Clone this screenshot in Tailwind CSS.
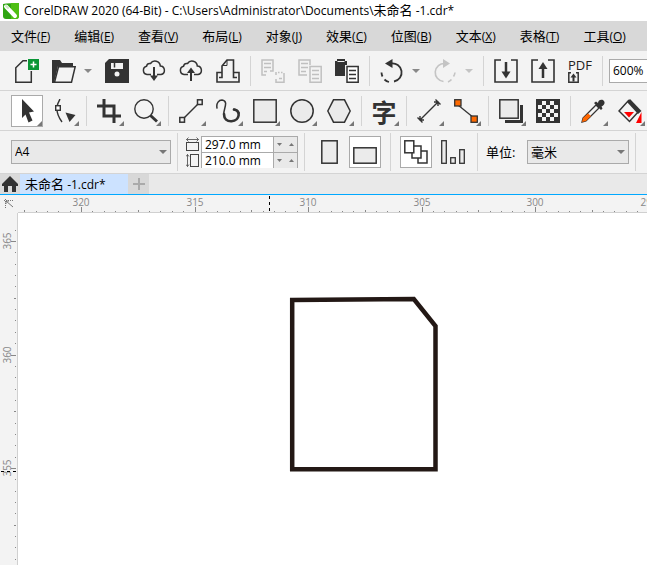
<!DOCTYPE html>
<html lang="zh-CN">
<head>
  <meta charset="UTF-8" />
  <meta name="viewport" content="width=device-width, initial-scale=1.0" />
  <title>CorelDRAW 2020 (64-Bit)</title>
  <script src="https://cdn.jsdelivr.net/npm/@tailwindcss/browser@4"></script>
</head>
<body class="h-screen flex flex-col overflow-hidden bg-white text-black text-[12px] leading-4 font-['Open_Sans','Noto_Sans_CJK_SC',sans-serif]">

  <!-- Shared pieces -->
  <svg class="hidden">
    <defs>
      <pattern id="grip" width="4" height="4" patternUnits="userSpaceOnUse">
        <rect width="1" height="1" fill="#b4b4b4" /><rect x="2" y="2" width="1" height="1" fill="#b4b4b4" />
      </pattern>
      <symbol id="flyout" viewBox="0 0 5 5"><path d="M5 0V5H0Z" fill="#777" /></symbol>
      <symbol id="caret" viewBox="0 0 8 4"><path d="M0 0H8L4 4Z" /></symbol>
    </defs>
  </svg>

  <!-- Title bar -->
  <header class="h-[21px] shrink-0 flex items-center pl-[3px] gap-[5px] whitespace-nowrap">
    <svg class="w-4 h-4 shrink-0" viewBox="0 0 16 16">
      <path d="M0 1Q6 0 16 0V13Q16 16 13 16H3Q0 16 0 13Z" fill="#2fa512" />
      <path d="M8 0H16V13Q16 16 13 16H8Z" fill="#4fbf14" />
      <path d="M3 3.500L12 13" stroke="#fff" stroke-width="4" stroke-linecap="round" />
      <path d="M3 3L5 5" stroke="#cfe8c5" stroke-width="2" stroke-linecap="round" />
    </svg>
    <h1>CorelDRAW 2020 (64-Bit) - C:\Users\Administrator\Documents\<span class="text-[13px]">未命名</span> -1.cdr*</h1>
  </header>

  <!-- Menu -->
  <nav class="h-[30px] shrink-0 flex items-center gap-6 pl-[11px] bg-[#d8d8d8] whitespace-nowrap">
    <button><span class="text-[13px]">文件</span>(<u>F</u>)</button>
    <button><span class="text-[13px]">编辑</span>(<u>E</u>)</button>
    <button><span class="text-[13px]">查看</span>(<u>V</u>)</button>
    <button><span class="text-[13px]">布局</span>(<u>L</u>)</button>
    <button><span class="text-[13px]">对象</span>(<u>J</u>)</button>
    <button><span class="text-[13px]">效果</span>(<u>C</u>)</button>
    <button><span class="text-[13px]">位图</span>(<u>B</u>)</button>
    <button><span class="text-[13px]">文本</span>(<u>X</u>)</button>
    <button><span class="text-[13px]">表格</span>(<u>T</u>)</button>
    <button><span class="text-[13px]">工具</span>(<u>O</u>)</button>
  </nav>

  <!-- Standard toolbar -->
  <div class="h-10 shrink-0 flex items-center bg-[#f3f3f3] border-b border-[#d4d4d4] pl-[2px]">
    <svg class="w-[6px] h-9 mr-[7px] shrink-0"><rect width="6" height="36" fill="url(#grip)" /></svg>
    <div class="flex shrink-0 gap-[13px]">
      <button aria-label="New">
        <svg class="w-6 h-6" viewBox="0 0 24 24" fill="none" stroke="#333" stroke-width="1.500">
          <path d="M12 1.700H7.500L1 8.500V23H16.300V12M7.500 2V8.500H1" stroke="none" />
          <path d="M12 1.700H8L.8 8.800V23.200H16.300V12" />
          <rect x="13" y="0" width="11" height="11" fill="#0a9636" stroke="none" />
          <path d="M18.500 2.500V8.500M15.500 5.500H21.500" stroke="#fff" />
        </svg>
      </button>
      <div class="flex">
        <button aria-label="Open">
          <svg class="w-6 h-6" viewBox="0 0 24 24">
            <path d="M0 24V1H8L10 4H21V7H6L2 24Z" fill="#333" />
            <path d="M6.500 7.700H23.200L19.500 23.200H2.500Z" fill="#f3f3f3" stroke="#333" stroke-width="1.500" />
          </svg>
        </button>
        <button aria-label="Open recent" class="w-4 flex items-center justify-end"><svg class="w-2 h-1 fill-[#888]"><use href="#caret" /></svg></button>
      </div>
      <button aria-label="Save">
        <svg class="w-6 h-6" viewBox="0 0 24 24">
          <path d="M4 0H24V24H0V4Z" fill="#333" />
          <path d="M6 4H18V10H6Z" fill="#f3f3f3" /><path d="M9.500 4V8.500" stroke="#333" stroke-width="1.500" />
          <circle cx="12" cy="15" r="2.500" fill="#f3f3f3" />
        </svg>
      </button>
      <button aria-label="Open from cloud">
        <svg class="w-6 h-6" viewBox="0 0 24 24" fill="none" stroke="#333" stroke-width="1.500">
          <path d="M9 15.500H5A4.200 4.200 0 0 1 4.500 7.300A3.500 3.500 0 0 1 8.500 4.500A5.300 5.300 0 0 1 18.300 7A4.300 4.300 0 0 1 19 15.500H15" />
          <path d="M12 8V20" stroke-width="2" /><path d="M8 16.500H16L12 22Z" fill="#333" stroke="none" />
        </svg>
      </button>
      <button aria-label="Save to cloud">
        <svg class="w-6 h-6" viewBox="0 0 24 24" fill="none" stroke="#333" stroke-width="1.500">
          <path d="M9 15.500H5A4.200 4.200 0 0 1 4.500 7.300A3.500 3.500 0 0 1 8.500 4.500A5.300 5.300 0 0 1 18.300 7A4.300 4.300 0 0 1 19 15.500H15" />
          <path d="M12 12V22" stroke-width="2" /><path d="M8 14H16L12 8.500Z" fill="#333" stroke="none" />
        </svg>
      </button>
      <button aria-label="Print">
        <svg class="w-6 h-6" viewBox="0 0 24 24" fill="none" stroke="#333" stroke-width="1.600">
          <path d="M6 13.500H1V23H23V13.500H18" />
          <path d="M3 18.500H6V7L11 1H17.500V18.500H21" /><path d="M11 1V6.500H6" stroke-width="1" />
        </svg>
      </button>
    </div>
    <div class="w-px h-[30px] bg-[#d4d4d4] mx-[10px] shrink-0"></div>
    <div class="flex shrink-0 gap-[13px]">
      <button aria-label="Cut" disabled>
        <svg class="w-6 h-6" viewBox="0 0 24 24" fill="none" stroke="#c0c0c0" stroke-width="1.500">
          <path d="M5 16H1V1H12V12H9M3 4.500H10M3 8.500H10M3 12.500H6" />
          <path d="M15 13V16M17 13.500H18.500M20 13.500H21.500M23 14V23.300H15V20M18 19.500H21" />
        </svg>
      </button>
      <button aria-label="Copy" disabled>
        <svg class="w-6 h-6" viewBox="0 0 24 24" fill="none" stroke="#c0c0c0" stroke-width="1.500">
          <path d="M9 16H1V1H12V6M3 4.500H10M3 8.500H10M3 12.500H8" />
          <path d="M12 7.500H23.200V23.200H12ZM14 11.500H21M14 15.500H21M14 19.500H21" />
        </svg>
      </button>
      <button aria-label="Paste">
        <svg class="w-6 h-6" viewBox="0 0 24 24">
          <path d="M0 2H2V0H10V2H12V6H10V17H0Z" fill="#333" /><path d="M2.500 2.500H9.500" stroke="#f3f3f3" />
          <path d="M12 7.500H23.200V23.200H12ZM14 11.500H21M14 15.500H21M14 19.500H21" fill="#fff" stroke="#333" stroke-width="1.500" />
        </svg>
      </button>
    </div>
    <div class="w-px h-[30px] bg-[#d4d4d4] mx-[10px] shrink-0"></div>
    <div class="flex shrink-0 gap-[13px]">
      <div class="flex">
        <button aria-label="Undo">
          <svg class="w-6 h-6" viewBox="0 0 24 24" fill="none" stroke="#333" stroke-width="1.800">
            <path d="M11 4.500A9 9 0 0 1 14 22.500" /><path d="M9 23A10 10 0 0 1 4.500 20.500M2.500 17.500A10 10 0 0 1 1.500 13.500" />
            <path d="M5 4.500L12.500 0V9Z" fill="#333" stroke="none" />
          </svg>
        </button>
        <button aria-label="Undo list" class="w-4 flex items-center justify-end"><svg class="w-2 h-1 fill-[#888]"><use href="#caret" /></svg></button>
      </div>
      <div class="flex">
        <button aria-label="Redo" disabled>
          <svg class="w-6 h-6" viewBox="0 0 24 24" fill="none" stroke="#c4c4c4" stroke-width="1.600">
            <path d="M12 4.500A9 9 0 0 0 10.500 22.500" /><path d="M15 23A10 10 0 0 0 18.500 20.500M20.500 17.500A10 10 0 0 0 22 13.500" />
            <path d="M17 4.500L10 0V9Z" fill="#c4c4c4" stroke="none" />
          </svg>
        </button>
        <button aria-label="Redo list" disabled class="w-4 flex items-center justify-end"><svg class="w-2 h-1 fill-[#c4c4c4]"><use href="#caret" /></svg></button>
      </div>
    </div>
    <div class="w-px h-[30px] bg-[#d4d4d4] mx-[10px] shrink-0"></div>
    <div class="flex shrink-0 gap-[13px]">
      <button aria-label="Import">
        <svg class="w-6 h-6" viewBox="0 0 24 24" fill="none" stroke="#333" stroke-width="1.600">
          <path d="M7 1H1V23H23V1H17" /><path d="M12 3V14" stroke-width="2.500" /><path d="M7.500 12.500H16.500L12 19.500Z" fill="#333" stroke="none" />
        </svg>
      </button>
      <button aria-label="Export">
        <svg class="w-6 h-6" viewBox="0 0 24 24" fill="none" stroke="#333" stroke-width="1.600">
          <path d="M7 1H1V23H23V1H17" /><path d="M12 8V19" stroke-width="2.500" /><path d="M7.500 10H16.500L12 3Z" fill="#333" stroke="none" />
        </svg>
      </button>
      <button class="w-6 h-6 flex flex-col items-start gap-px">
        <span class="text-[13px] leading-3 text-[#222]">PDF</span>
        <svg class="w-[11px] h-[11px]" viewBox="0 0 11 11" fill="none" stroke="#333" stroke-width="1.500">
          <path d="M3 .8H.8V10.200H10.200V.8H8" /><path d="M5.500 5V9.500" stroke-width="2" /><path d="M2.500 5.500H8.500L5.500 1.500Z" fill="#333" stroke="none" />
        </svg>
      </button>
    </div>
    <div class="w-px h-[30px] bg-[#d4d4d4] ml-[10px] mr-[6px] shrink-0"></div>
    <input aria-label="Zoom level" value="600%" class="w-24 h-6 shrink-0 px-[3px] bg-white border border-[#aaa]" />
  </div>

  <!-- Toolbox -->
  <div class="h-10 shrink-0 flex items-center bg-[#f3f3f3] border-b border-[#d4d4d4] pl-[2px]">
    <svg class="w-[6px] h-9 mr-[7px] shrink-0"><rect width="6" height="36" fill="url(#grip)" /></svg>
    <div class="flex shrink-0 gap-[13px]">
      <button aria-label="Pick" class="relative -m-1 p-[3px] bg-white border border-[#aaa]">
        <svg class="w-6 h-6" viewBox="0 0 24 24"><path d="M7 0L19 12.500L14 13.500L17.500 21.500L13.500 23.500L10.500 15.500L7 19Z" fill="#333" /></svg>
        <svg class="absolute right-0 bottom-0 w-[5px] h-[5px]"><use href="#flyout" /></svg>
      </button>
      <button aria-label="Shape" class="relative">
        <svg class="w-6 h-6" viewBox="0 0 24 24" fill="none" stroke="#333" stroke-width="1.400">
          <path d="M8 0Q1 11 10 23" /><rect x="3.700" y="6.700" width="4.600" height="4.600" fill="#fff" />
          <path d="M13.500 13.500L23.500 16L17.500 23Z" fill="#333" stroke="none" />
        </svg>
        <svg class="absolute -right-[3px] -bottom-[3px] w-[5px] h-[5px]"><use href="#flyout" /></svg>
      </button>
    </div>
    <div class="w-px h-[30px] bg-[#d4d4d4] mx-[10px] shrink-0"></div>
    <div class="flex shrink-0 gap-[13px]">
      <button aria-label="Crop" class="relative">
        <svg class="w-6 h-6" viewBox="0 0 24 24" fill="none" stroke="#333" stroke-width="3"><path d="M7 0V17H24M0 7H17V24" /></svg>
        <svg class="absolute -right-[3px] -bottom-[3px] w-[5px] h-[5px]"><use href="#flyout" /></svg>
      </button>
      <button aria-label="Zoom" class="relative">
        <svg class="w-6 h-6" viewBox="0 0 24 24" fill="none" stroke="#333">
          <circle cx="10" cy="10" r="9.200" stroke-width="1.400" /><path d="M16.500 16.500L23 22.500" stroke-width="3" />
        </svg>
        <svg class="absolute -right-[3px] -bottom-[3px] w-[5px] h-[5px]"><use href="#flyout" /></svg>
      </button>
    </div>
    <div class="w-px h-[30px] bg-[#d4d4d4] mx-[10px] shrink-0"></div>
    <div class="flex shrink-0 gap-[13px]">
      <button aria-label="Freehand" class="relative">
        <svg class="w-6 h-6" viewBox="0 0 24 24" fill="none" stroke="#333" stroke-width="1.500">
          <path d="M5 19L19 5" /><rect x=".8" y="18.500" width="4.700" height="4.700" /><rect x="18.500" y=".8" width="4.700" height="4.700" />
        </svg>
        <svg class="absolute -right-[3px] -bottom-[3px] w-[5px] h-[5px]"><use href="#flyout" /></svg>
      </button>
      <button aria-label="Artistic media" class="relative">
        <svg class="w-6 h-6" viewBox="0 0 24 24" fill="none" stroke="#333" stroke-linecap="round">
          <path d="M1 9C0 4 3 1 6 1C14 2 6 12 8 17" stroke-width="1.500" />
          <path d="M8 15C8 20 11 22.500 15.500 22.300C24 21.500 25 12 18 10.500" stroke-width="2.600" />
          <path d="M23 14C22 11.500 20 10.500 18 10.500" stroke-width="2" />
        </svg>
        <svg class="absolute -right-[3px] -bottom-[3px] w-[5px] h-[5px]"><use href="#flyout" /></svg>
      </button>
      <button aria-label="Rectangle" class="relative">
        <svg class="w-6 h-6" viewBox="0 0 24 24"><rect x=".8" y=".8" width="22.400" height="22.400" fill="#ebebeb" stroke="#333" stroke-width="1.500" /></svg>
        <svg class="absolute -right-[3px] -bottom-[3px] w-[5px] h-[5px]"><use href="#flyout" /></svg>
      </button>
      <button aria-label="Ellipse" class="relative">
        <svg class="w-6 h-6" viewBox="0 0 24 24"><circle cx="12" cy="12" r="11.200" fill="#ebebeb" stroke="#333" stroke-width="1.500" /></svg>
        <svg class="absolute -right-[3px] -bottom-[3px] w-[5px] h-[5px]"><use href="#flyout" /></svg>
      </button>
      <button aria-label="Polygon" class="relative">
        <svg class="w-6 h-6" viewBox="0 0 24 24"><path d="M6.500 .8H17.500L23.200 12L17.500 23.200H6.500L.8 12Z" fill="#ebebeb" stroke="#333" stroke-width="1.500" /></svg>
        <svg class="absolute -right-[3px] -bottom-[3px] w-[5px] h-[5px]"><use href="#flyout" /></svg>
      </button>
    </div>
    <div class="w-px h-[30px] bg-[#d4d4d4] mx-[10px] shrink-0"></div>
    <button class="relative w-6 h-6 shrink-0 text-[25px] leading-6 font-bold text-[#333] font-['Noto_Sans_CJK_SC',sans-serif] flex justify-center">字
      <svg class="absolute -right-[3px] -bottom-[3px] w-[5px] h-[5px]"><use href="#flyout" /></svg>
    </button>
    <div class="w-px h-[30px] bg-[#d4d4d4] mx-[10px] shrink-0"></div>
    <div class="flex shrink-0 gap-[13px]">
      <button aria-label="Dimension" class="relative">
        <svg class="w-6 h-6" viewBox="0 0 24 24" fill="none" stroke="#333" stroke-width="1.400"><path d="M3 21L21 3M.5 18.500L5.500 23.500M18.500 .5L23.500 5.500M3 17V21H7M17 3H21V7" /></svg>
        <svg class="absolute -right-[3px] -bottom-[3px] w-[5px] h-[5px]"><use href="#flyout" /></svg>
      </button>
      <button aria-label="Connector" class="relative">
        <svg class="w-6 h-6" viewBox="0 0 24 24" fill="#ff6a00" stroke="#333" stroke-width="1.300">
          <path d="M4 6L20 19" /><rect x=".7" y=".7" width="6.300" height="6.300" /><rect x="17" y="17" width="6.300" height="6.300" />
        </svg>
        <svg class="absolute -right-[3px] -bottom-[3px] w-[5px] h-[5px]"><use href="#flyout" /></svg>
      </button>
    </div>
    <div class="w-px h-[30px] bg-[#d4d4d4] mx-[10px] shrink-0"></div>
    <div class="flex shrink-0 gap-[13px]">
      <button aria-label="Drop shadow" class="relative">
        <svg class="w-6 h-6" viewBox="0 0 24 24"><path d="M21 6H24V24H6V21H21Z" fill="#333" /><rect x=".8" y=".8" width="18.400" height="18.400" fill="#ebebeb" stroke="#333" stroke-width="1.500" /></svg>
        <svg class="absolute -right-[3px] -bottom-[3px] w-[5px] h-[5px]"><use href="#flyout" /></svg>
      </button>
      <button aria-label="Transparency">
        <svg class="w-6 h-6" viewBox="0 0 24 24">
          <rect width="24" height="24" fill="#333" />
          <path d="M6 2h4v4h-4zM14 2h4v4h-4zM2 6h4v4h-4zM10 6h4v4h-4zM18 6h4v4h-4zM6 10h4v4h-4zM14 10h4v4h-4zM2 14h4v4h-4zM10 14h4v4h-4zM18 14h4v4h-4zM6 18h4v4h-4zM14 18h4v4h-4z" fill="#f3f3f3" />
        </svg>
      </button>
    </div>
    <div class="w-px h-[30px] bg-[#d4d4d4] mx-[10px] shrink-0"></div>
    <div class="flex shrink-0 gap-[13px]">
      <button aria-label="Eyedropper" class="relative">
        <svg class="w-6 h-6" viewBox="0 0 24 24">
          <path d="M15 6L18 9L5 22L1 23L2 19Z" fill="#f3f3f3" stroke="#333" stroke-width="1.300" />
          <path d="M7 14.500L10 17L5 22L1 23L2 19Z" fill="#f60" />
          <path d="M13 4L15 2.500L17 4C17 1 20 0 22 1C24.500 3 24 6 20.500 7.500L21.500 9.500L20 11Z" fill="#333" />
        </svg>
        <svg class="absolute -right-[3px] -bottom-[3px] w-[5px] h-[5px]"><use href="#flyout" /></svg>
      </button>
      <button aria-label="Interactive fill" class="relative">
        <svg class="w-6 h-6" viewBox="0 0 24 24">
          <path d="M10.500 1.500L21 12L11.500 22.500L1 12Z" fill="#f3f3f3" stroke="#333" stroke-width="1.500" />
          <path d="M9 3L12 0L23.500 12L20 15Z" fill="#333" />
          <path d="M6 13H16L11 18.500ZM23.500 13V24H18Z" fill="#f00" />
        </svg>
        <svg class="absolute -right-[3px] -bottom-[3px] w-[5px] h-[5px]"><use href="#flyout" /></svg>
      </button>
    </div>
  </div>

  <!-- Property bar -->
  <div class="h-[43px] shrink-0 flex items-center bg-[#f3f3f3] border-b border-[#d4d4d4] pl-[2px]">
    <svg class="w-[6px] h-10 mr-[3px] shrink-0"><rect width="6" height="40" fill="url(#grip)" /></svg>
    <div class="relative shrink-0">
      <select aria-label="Page size" class="appearance-none block w-40 h-6 pl-[3px] bg-[#e9e9e9] border border-[#aaa]"><option>A4</option><option>A3</option></select>
      <svg class="absolute right-1 top-[10px] w-2 h-1 fill-[#777] pointer-events-none"><use href="#caret" /></svg>
    </div>
    <div class="w-px h-[38px] bg-[#d4d4d4] ml-[6px] mr-2 shrink-0"></div>
    <div class="flex flex-col gap-[3px] shrink-0 mr-[2px]">
      <svg class="w-[13px] h-[14px]" viewBox="0 0 13 14" fill="none" stroke="#444"><path d="M.5 2.500H12.500M2.500 .5L.5 2.500L2.500 4.500M10.500 .5L12.500 2.500L10.500 4.500" stroke-width=".8" /><rect x=".5" y="5.500" width="12" height="8" /></svg>
      <svg class="w-[13px] h-[14px]" viewBox="0 0 13 14" fill="none" stroke="#444"><path d="M1.500 .5V12.500M0 2.500L1.500 .5L3 2.500M0 10.500L1.500 12.500L3 10.500" stroke-width=".8" /><rect x="4.500" y=".5" width="8" height="12" /></svg>
    </div>
    <div class="w-[97px] h-8 shrink-0 border border-[#aaa] flex flex-col">
      <div class="flex-1 flex border-b border-[#aaa]">
        <input aria-label="Page width" value="297.0 mm" class="w-[72px] h-[15px] pl-[3px] bg-white border-r border-[#aaa]" />
        <button aria-label="Decrease width" class="w-[11px] grid place-items-center bg-[#e9e9e9]"><svg class="w-[5px] h-[3px]" viewBox="0 0 5 3"><path d="M0 0H5L2.500 3Z" fill="#777" /></svg></button>
        <button aria-label="Increase width" class="w-3 grid place-items-center bg-[#e9e9e9]"><svg class="w-[5px] h-[3px]" viewBox="0 0 5 3"><path d="M0 3H5L2.500 0Z" fill="#777" /></svg></button>
      </div>
      <div class="flex-1 flex">
        <input aria-label="Page height" value="210.0 mm" class="w-[72px] h-[15px] pl-[3px] bg-white border-r border-[#aaa]" />
        <button aria-label="Decrease height" class="w-[11px] grid place-items-center bg-[#e9e9e9]"><svg class="w-[5px] h-[3px]" viewBox="0 0 5 3"><path d="M0 0H5L2.500 3Z" fill="#777" /></svg></button>
        <button aria-label="Increase height" class="w-3 grid place-items-center bg-[#e9e9e9]"><svg class="w-[5px] h-[3px]" viewBox="0 0 5 3"><path d="M0 3H5L2.500 0Z" fill="#777" /></svg></button>
      </div>
    </div>
    <div class="w-px h-[38px] bg-[#d4d4d4] mx-[6px] shrink-0"></div>
    <div class="flex items-center gap-[6px] shrink-0">
      <button aria-label="Portrait" class="w-8 h-8 grid place-items-center pl-[4px]"><svg class="w-[17px] h-6"><rect x=".8" y=".8" width="15.400" height="22.400" fill="#ebebeb" stroke="#333" stroke-width="1.500" /></svg></button>
      <button aria-label="Landscape" class="w-8 h-8 flex items-end justify-center pb-[3px] bg-white border border-[#aaa]"><svg class="w-6 h-[17px]"><rect x=".8" y=".8" width="22.400" height="15.400" fill="#ebebeb" stroke="#333" stroke-width="1.500" /></svg></button>
    </div>
    <div class="w-px h-[38px] bg-[#d4d4d4] mx-[9px] shrink-0"></div>
    <div class="flex items-center gap-[5px] shrink-0">
      <button aria-label="All pages" class="w-8 h-8 grid place-items-center bg-white border border-[#aaa]">
        <svg class="w-6 h-6" viewBox="0 0 24 24" fill="#fff" stroke="#333" stroke-width="1.500"><rect x="14" y="11" width="9" height="12" /><rect x="8" y="6" width="9" height="12" /><rect x=".8" y=".8" width="9" height="12" /></svg>
      </button>
      <button aria-label="Current page" class="w-8 h-8 grid place-items-center">
        <svg class="w-6 h-6" viewBox="0 0 24 24" fill="#ebebeb" stroke="#333" stroke-width="1.300"><rect x=".7" y=".7" width="4.600" height="22.600" /><rect x="9.700" y="17.700" width="4.600" height="5.600" /><rect x="18.700" y="9.700" width="4.600" height="13.600" /></svg>
      </button>
    </div>
    <div class="w-px h-[38px] bg-[#d4d4d4] mx-2 shrink-0"></div>
    <label for="units" class="w-[41px] shrink-0 text-[13px] whitespace-nowrap">单位:</label>
    <div class="relative shrink-0">
      <select id="units" class="appearance-none block w-[102px] h-6 pl-[3px] text-[13px] bg-[#e9e9e9] border border-[#aaa]"><option>毫米</option><option>厘米</option></select>
      <svg class="absolute right-1 top-[10px] w-2 h-1 fill-[#777] pointer-events-none"><use href="#caret" /></svg>
    </div>
    <div class="w-px h-[38px] bg-[#d4d4d4] ml-[6px] shrink-0"></div>
  </div>

  <!-- Document tabs -->
  <div class="h-[21px] shrink-0 flex bg-[#e9e9e9] border-b border-[#00a8ff]">
    <button aria-label="Home" class="w-5 bg-[#dadada] flex items-center justify-center">
      <svg class="w-4 h-4" viewBox="0 0 16 16"><path d="M8 0L16 8V10H14V16H10V10H6V16H2V10H0V8Z" fill="#333" /></svg>
    </button>
    <button class="w-[108px] pl-[5px] text-left bg-[#cce2ff] whitespace-nowrap"><span class="text-[13px]">未命名</span> -1.cdr*</button>
    <button aria-label="New document" class="w-[21px] bg-[#d8d8d8] flex items-center justify-center">
      <svg class="w-3 h-3"><path d="M6 0V12M0 6H12" stroke="#aaa" stroke-width="2" /></svg>
    </button>
  </div>

  <!-- Horizontal ruler -->
  <div class="h-[18px] shrink-0 flex bg-[#f3f3f3]">
    <svg class="w-[18px] h-[18px] shrink-0" fill="none" stroke="#777"><path d="M4 5.500H14M5.500 4V14" stroke-dasharray="1 1" /><path d="M6 6L13 12M6 9V6H9" /></svg>
    <svg id="ruler-x" class="flex-1 h-[18px] border-b border-[#d0d0d0] text-[10px]" stroke="#888" shape-rendering="crispEdges"></svg>
  </div>

  <!-- Vertical ruler and drawing area -->
  <main class="flex-1 min-h-0 flex">
    <svg id="ruler-y" class="w-[18px] h-full shrink-0 bg-[#f3f3f3] border-r border-[#d0d0d0] text-[10px]" stroke="#888" shape-rendering="crispEdges"></svg>
    <svg class="flex-1 h-full min-w-0"><path d="M274.200 87L395.800 86L417.500 113V256.200H274.200Z" fill="none" stroke="#231815" stroke-width="4.500" /></svg>
  </main>

  <script>
    const STEP = 11.35; // half a millimetre at this zoom

    function ticks(id, vertical, origin, start, step, cursor) {
      let out = "";
      for (let k = -5; k < 200; k++) {
        const p = Math.round(origin + k * STEP);
        if (p < 6) continue;
        const major = k % 10 === 0;
        const len = major ? 5 : k % 5 === 0 ? 2 : 1;
        const q = p + 0.5;
        out += vertical
          ? `<path d="M${major ? 11 : 16 - len} ${q}H16"/>`
          : `<path d="M${q} ${17 - len}V17"/>`;
        if (!major) continue;
        const n = start + (k / 10) * step;
        out += vertical
          ? `<text transform="translate(11 ${p}) rotate(-90)" text-anchor="middle" fill="#888" stroke="none">${n}</text>`
          : `<text x="${p}" y="11" text-anchor="middle" fill="#888" stroke="none">${n}</text>`;
      }
      out += vertical
        ? `<path d="M1 ${cursor}H16" stroke="#000" stroke-dasharray="3 3"/>`
        : `<path d="M${cursor} 1V17" stroke="#000" stroke-dasharray="3 3"/>`;
      document.getElementById(id).innerHTML = out;
    }

    ticks("ruler-x", false, 63, 320, -5, 251.5);
    ticks("ruler-y", true, 28, 365, -5, 258.5);
  </script>
</body>
</html>
